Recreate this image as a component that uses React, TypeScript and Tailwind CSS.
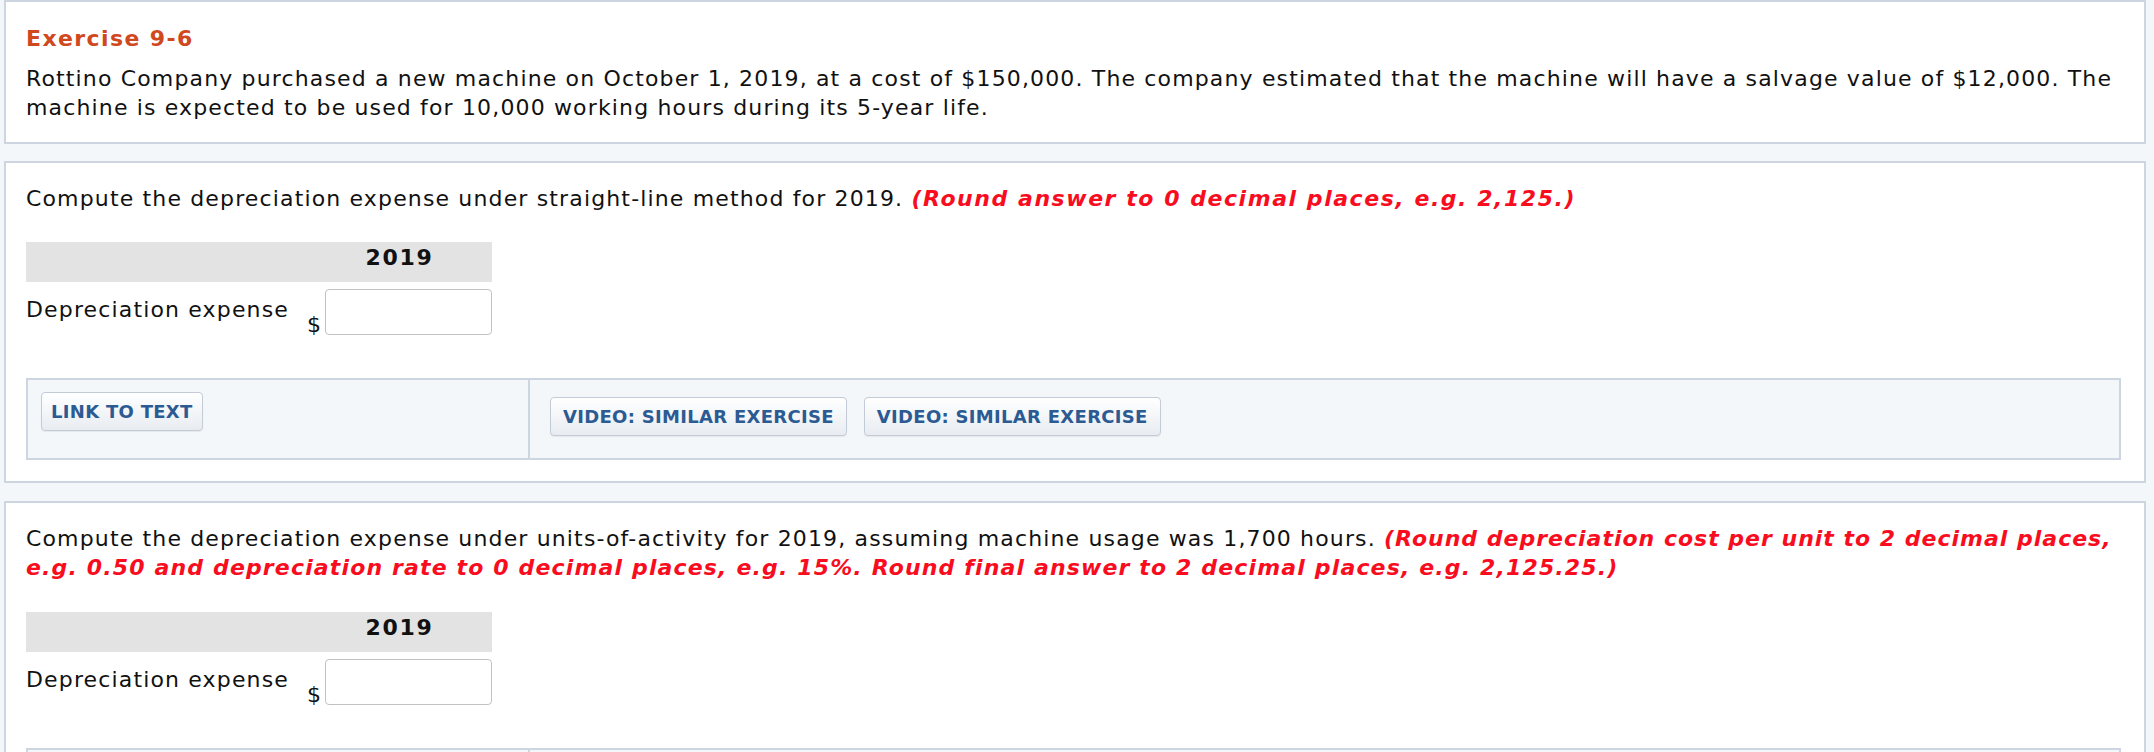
import React from 'react'

const FONT = "font-['DejaVu_Sans',Verdana,sans-serif]"

function ToolButton({ label, tight }: { label: string; tight?: boolean }) {
  return (
    <button
      type="button"
      className={`h-[39px] ${tight ? 'px-[9px]' : 'px-[12px]'} flex items-center rounded-[4px] border border-[#c3cbd6] bg-linear-to-b from-white to-[#e8ecf1] shadow-[0_1px_1px_rgba(0,0,0,0.06)] text-[18px] leading-none font-bold tracking-[0.3px] text-[#2c5a92] whitespace-nowrap`}
    >
      {label}
    </button>
  )
}

function Toolbar() {
  return (
    <div className="mr-[13px] flex h-[82px] border-2 border-[#cdd5e0] bg-[#f4f7fa]">
      <div className="w-[502px] border-r-2 border-[#cdd5e0] pl-[13px] pt-[12px]">
        <ToolButton label="LINK TO TEXT" tight />
      </div>
      <div className="flex items-start gap-[17px] pl-[20px] pt-[17px]">
        <ToolButton label="VIDEO: SIMILAR EXERCISE" />
        <ToolButton label="VIDEO: SIMILAR EXERCISE" />
      </div>
    </div>
  )
}

function AnswerTable({ year }: { year: string }) {
  return (
    <div className="w-[466px]">
      <div className="flex h-[40px] bg-[#e3e3e3]">
        <div className="w-[281px]" />
        <div className="w-[185px] pt-[1px] text-center font-bold tracking-[1.7px]">{year}</div>
      </div>
      <div className="mt-[7px] flex h-[46px] items-start">
        <div className="w-[281px] pt-[6px]">Depreciation expense</div>
        <div className="w-[18px] self-end leading-none mb-[-1px] tracking-normal">$</div>
        <input
          type="text"
          className="w-[167px] h-[46px] rounded-[4px] border border-[#c2c2c2] bg-white outline-none"
        />
      </div>
    </div>
  )
}

export default function App() {
  return (
    <div className={`${FONT} min-h-screen bg-[#f4f7fa] pl-[4px] pr-[8px] text-[22px] leading-[29px] tracking-[1.15px] text-[#111]`}>
      {/* Exercise header */}
      <div className="border-2 border-[#cdd5e0] bg-white pl-[20px] pr-[8px] pt-[22px] pb-[20px]">
        <h1 className="font-bold tracking-[1.4px] text-[#d0481d]">Exercise 9-6</h1>
        <p className="mt-[11px]">
          Rottino Company purchased a new machine on October 1, 2019, at a cost of $150,000. The company estimated that the machine will have a salvage value of $12,000. The
          <br />
          machine is expected to be used for 10,000 working hours during its 5-year life.
        </p>
      </div>

      {/* Part a */}
      <div className="mt-[17px] border-2 border-[#cdd5e0] bg-white pl-[20px] pr-[10px] pt-[21px] pb-[21px]">
        <p>
          Compute the depreciation expense under straight-line method for 2019.{' '}
          <span className="font-bold italic tracking-[1.55px] text-[#f80d1f]">(Round answer to 0 decimal places, e.g. 2,125.)</span>
        </p>
        <div className="mt-[29px]">
          <AnswerTable year="2019" />
        </div>
        <div className="mt-[43px]">
          <Toolbar />
        </div>
      </div>

      {/* Part b */}
      <div className="mt-[18px] border-2 border-[#cdd5e0] bg-white pl-[20px] pr-[10px] pt-[21px] pb-[21px]">
        <p>
          Compute the depreciation expense under units-of-activity for 2019, assuming machine usage was 1,700 hours.{' '}
          <span className="font-bold italic tracking-[1px] text-[#f80d1f]">
            (Round depreciation cost per unit to 2 decimal places,
            <br />
            <span className="tracking-[1.15px]">
              e.g. 0.50 and depreciation rate to 0 decimal places, e.g. 15%. Round final answer to 2 decimal places, e.g. 2,125.25.)
            </span>
          </span>
        </p>
        <div className="mt-[30px]">
          <AnswerTable year="2019" />
        </div>
        <div className="mt-[43px]">
          <Toolbar />
        </div>
      </div>
    </div>
  )
}
